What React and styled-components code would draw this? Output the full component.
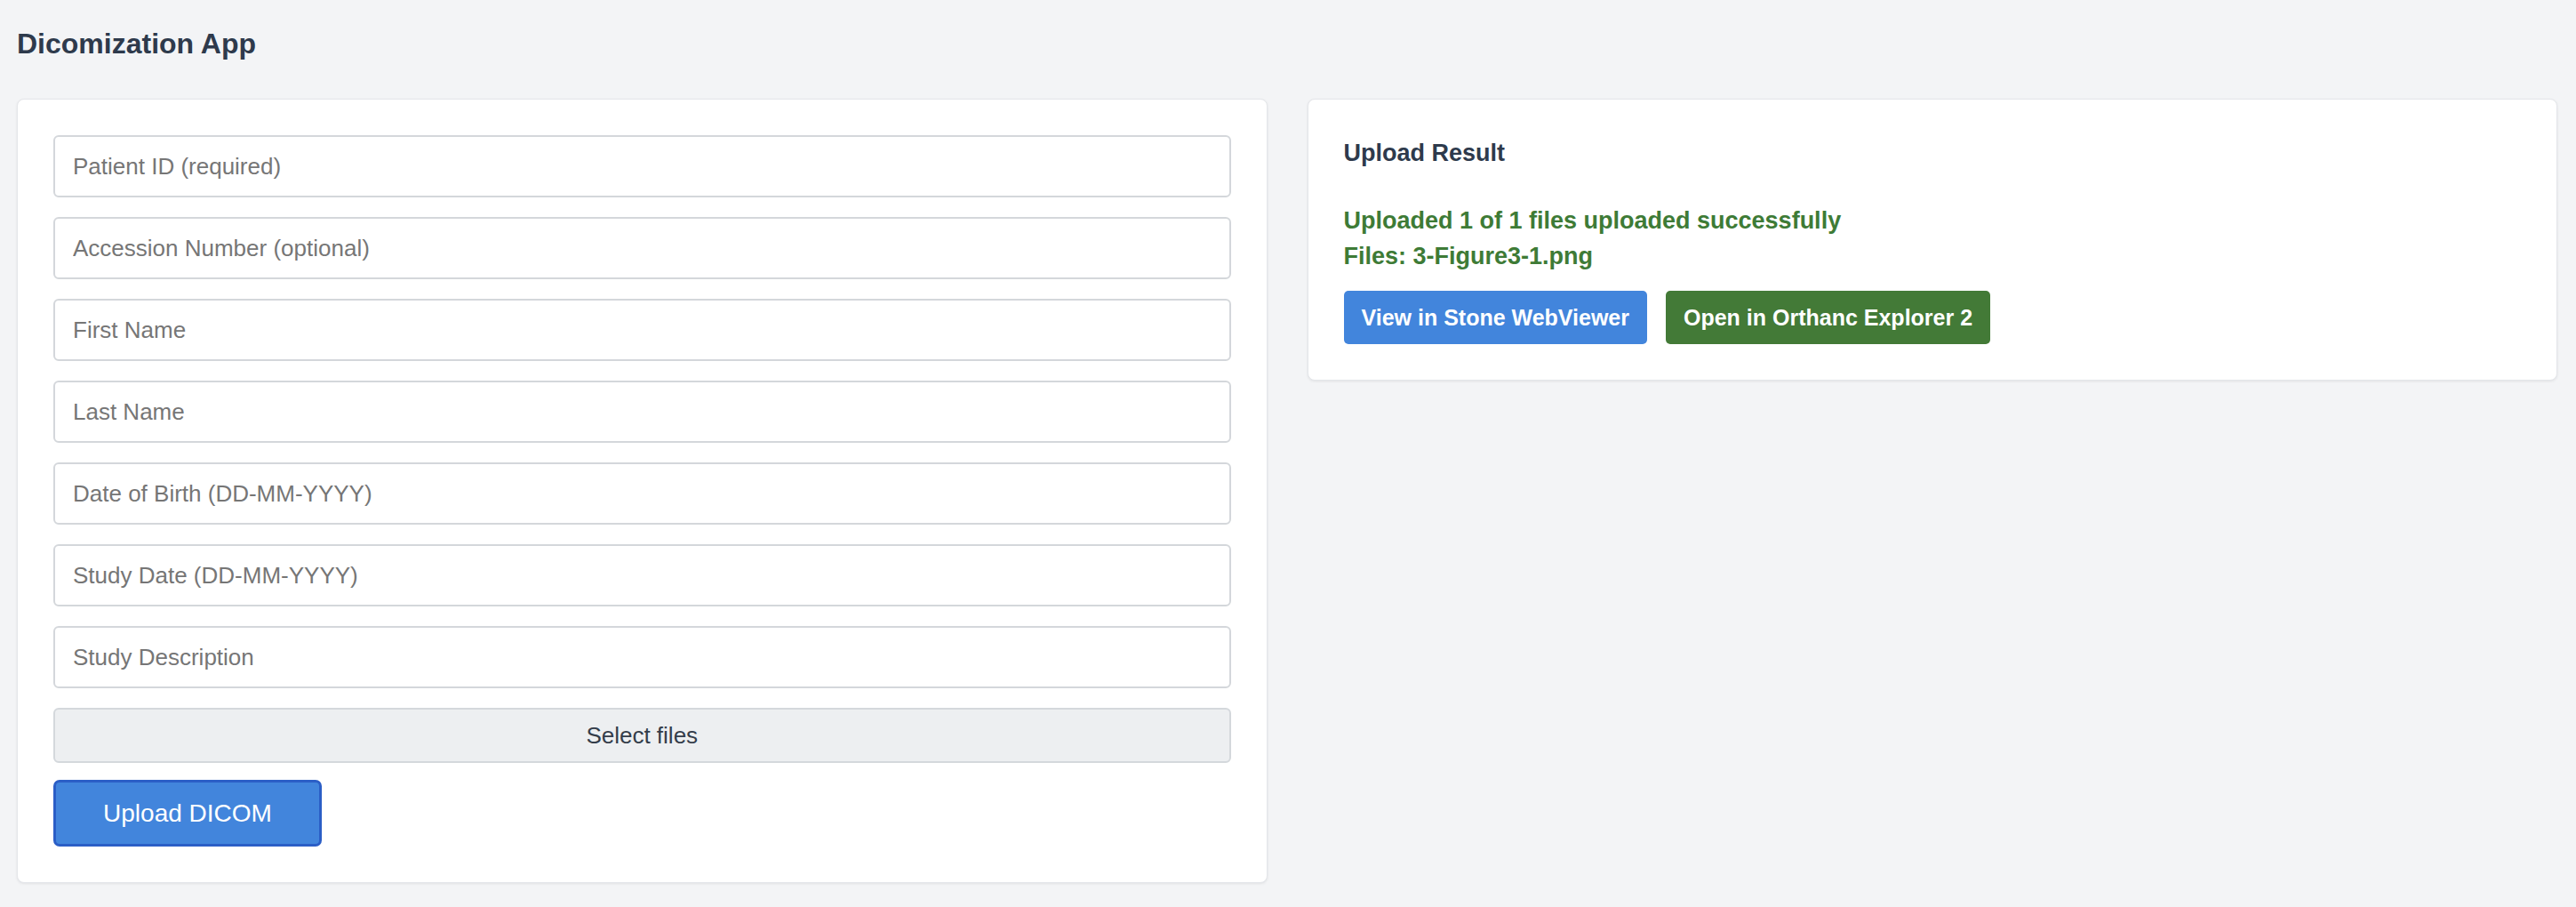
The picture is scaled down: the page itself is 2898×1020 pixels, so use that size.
import React from 'react';
import styled, { createGlobalStyle } from 'styled-components';

const GlobalStyle = createGlobalStyle`
  html, body {
    margin: 0;
    padding: 0;
    background: #f3f4f6;
    font-family: "Liberation Sans", Arial, Helvetica, sans-serif;
  }
  * {
    box-sizing: border-box;
  }
`;

const Page = styled.div`
  min-height: 1020px;
  padding: 30px 21px 28px 19px;
  background: #f3f4f6;
`;

const Title = styled.h1`
  margin: 0 0 43px;
  font-size: 32px;
  line-height: 38px;
  font-weight: 600;
  color: #2e3a4c;
`;

const Columns = styled.div`
  display: grid;
  grid-template-columns: 1fr 1fr;
  gap: 45px;
  align-items: start;
`;

const Card = styled.section`
  background: #fff;
  border: 1px solid #e4e6ea;
  border-radius: 8px;
  box-shadow: 0 1px 3px rgba(0, 0, 0, 0.08);
  padding: 40px;
`;

const Form = styled.form`
  display: flex;
  flex-direction: column;
  gap: 22px;
`;

const Field = styled.input`
  display: block;
  width: 100%;
  height: 70px;
  padding: 0 20px;
  font-family: inherit;
  font-size: 26px;
  color: #2e3a4c;
  background: #fff;
  border: 2px solid #d4d7db;
  border-radius: 6px;
  outline: none;

  &::placeholder {
    color: #767676;
  }
`;

const SelectFiles = styled.button`
  width: 100%;
  height: 62px;
  font-family: inherit;
  font-size: 26px;
  color: #343d4a;
  background: #edeff1;
  border: 2px solid #d4d8dc;
  border-radius: 6px;
  cursor: pointer;
`;

const UploadButton = styled.button`
  align-self: flex-start;
  margin-top: -3px;
  width: 302px;
  height: 75px;
  font-family: inherit;
  font-size: 28px;
  color: #fff;
  background: #4285dc;
  border: 3px solid #2b5ec6;
  border-radius: 7px;
  cursor: pointer;
`;

const ResultTitle = styled.h2`
  margin: 0 0 36px;
  font-size: 27px;
  line-height: 40px;
  font-weight: 600;
  color: #2e3a4c;
`;

const Message = styled.div`
  font-size: 27px;
  line-height: 40px;
  font-weight: 600;
  color: #3e7b36;
`;

const Actions = styled.div`
  display: flex;
  gap: 21px;
  margin-top: 19px;
`;

const LinkButton = styled.a`
  display: inline-flex;
  align-items: center;
  height: 60px;
  padding: 0 20px;
  font-size: 25px;
  font-weight: 600;
  color: #fff;
  text-decoration: none;
  border-radius: 5px;
  background: ${props => (props.$variant === 'green' ? '#437a37' : '#4285dc')};
`;

const fields = [
  'Patient ID (required)',
  'Accession Number (optional)',
  'First Name',
  'Last Name',
  'Date of Birth (DD-MM-YYYY)',
  'Study Date (DD-MM-YYYY)',
  'Study Description',
];

export default function App() {
  return (
    <>
      <GlobalStyle />
      <Page>
        <Title>Dicomization App</Title>
        <Columns>
          <Card>
            <Form onSubmit={e => e.preventDefault()}>
              {fields.map(f => (
                <Field key={f} type="text" placeholder={f} />
              ))}
              <SelectFiles type="button">Select files</SelectFiles>
              <UploadButton type="submit">Upload DICOM</UploadButton>
            </Form>
          </Card>

          <Card>
            <ResultTitle>Upload Result</ResultTitle>
            <Message>Uploaded 1 of 1 files uploaded successfully</Message>
            <Message>Files: 3-Figure3-1.png</Message>
            <Actions>
              <LinkButton href="#">View in Stone WebViewer</LinkButton>
              <LinkButton href="#" $variant="green">Open in Orthanc Explorer 2</LinkButton>
            </Actions>
          </Card>
        </Columns>
      </Page>
    </>
  );
}
